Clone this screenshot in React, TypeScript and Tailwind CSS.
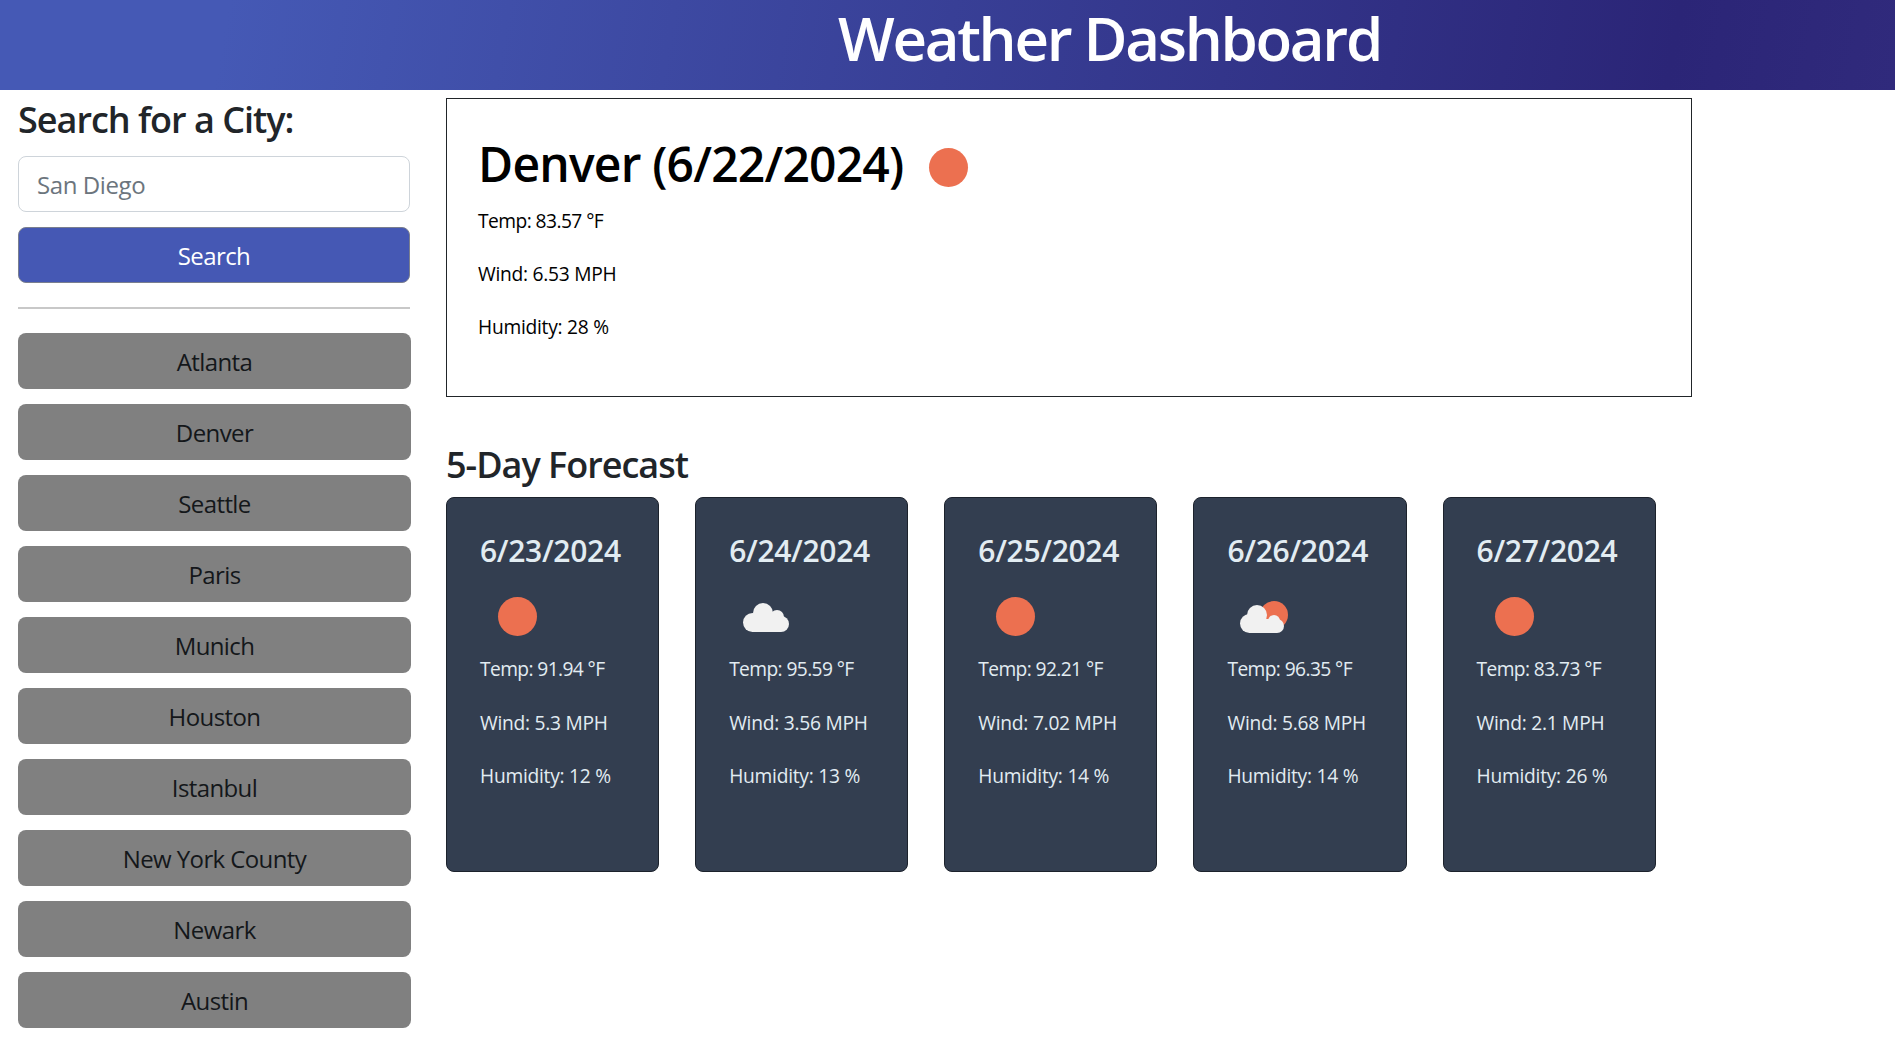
const font = "font-['Open_Sans','Noto_Sans',sans-serif]";

const cities = [
  "Atlanta",
  "Denver",
  "Seattle",
  "Paris",
  "Munich",
  "Houston",
  "Istanbul",
  "New York County",
  "Newark",
  "Austin",
];

type Icon = "sun" | "cloud" | "few";

const forecast: { date: string; icon: Icon; temp: string; wind: string; humidity: string }[] = [
  { date: "6/23/2024", icon: "sun", temp: "91.94", wind: "5.3", humidity: "12" },
  { date: "6/24/2024", icon: "cloud", temp: "95.59", wind: "3.56", humidity: "13" },
  { date: "6/25/2024", icon: "sun", temp: "92.21", wind: "7.02", humidity: "14" },
  { date: "6/26/2024", icon: "few", temp: "96.35", wind: "5.68", humidity: "14" },
  { date: "6/27/2024", icon: "sun", temp: "83.73", wind: "2.1", humidity: "26" },
];

function WeatherIcon({ icon }: { icon: Icon }) {
  return (
    <svg viewBox="0 0 75 75" className="block w-[75px] h-[75px]">
      {icon === "sun" && <circle cx="37.5" cy="37.5" r="19.5" fill="#ec7050" />}
      {icon === "few" && <circle cx="47" cy="36" r="14" fill="#ec7050" />}
      {icon === "cloud" && (
        <g fill="#f1f1f1">
          <circle cx="34" cy="34" r="10" />
          <circle cx="48" cy="38" r="7" />
          <circle cx="23.5" cy="43.5" r="9.5" />
          <circle cx="52" cy="45" r="8" />
          <rect x="23" y="38" width="29" height="15" />
        </g>
      )}
      {icon === "few" && (
        <g fill="#f1f1f1">
          <circle cx="30" cy="36" r="10" />
          <circle cx="47" cy="42" r="6" />
          <circle cx="22.5" cy="44.5" r="9.5" />
          <circle cx="50" cy="47" r="7" />
          <rect x="22" y="40" width="28" height="14" />
        </g>
      )}
    </svg>
  );
}

function App() {
  return (
    <div className={`${font} bg-white min-h-screen text-[#212529]`}>
      <header className="h-[90px] pl-[324px] pb-[14px] flex items-center justify-center bg-[linear-gradient(100deg,#4559b5_12%,#2b2577_88%,#302a7c_100%)]">
        <h1 className="text-[60px] leading-none font-semibold text-white tracking-[-2.3px]">
          Weather Dashboard
        </h1>
      </header>

      <div className="flex items-start pl-[18px]">
        <aside className="w-[393px] shrink-0">
          <h3 className="text-[36px] leading-[43px] mt-[8px] font-semibold tracking-[-1px]">
            Search for a City:
          </h3>
          <div className="mt-[15px] h-[56px] w-[392px] px-[18px] pt-[2px] flex items-center bg-white border border-[#ced4da] rounded-lg text-[24px] tracking-[-0.4px] text-[#6c757d]">
            San Diego
          </div>
          <button className="mt-[15px] h-[56px] w-[392px] pt-[2px] bg-[#4558b4] border border-[#7a7f8f] rounded-lg text-[24px] tracking-[-0.6px] text-white">
            Search
          </button>
          <hr className="mt-[24px] mb-[24px] w-[392px] border-t-2 border-[#c8c8c8]" />
          <div className="flex flex-col gap-[15px]">
            {cities.map((city) => (
              <button
                key={city}
                className="h-[56px] pt-[2px] bg-[#808080] rounded-lg text-[24px] tracking-[-0.6px] text-[#14171a]"
              >
                {city}
              </button>
            ))}
          </div>
        </aside>

        <main className="ml-[35px] w-[1246px]">
          <section className="mt-2 h-[299px] w-[1246px] border border-[#212529] px-[31px] pt-[32px] text-black">
            <div className="flex items-center">
              <h2 className="text-[48px] leading-[58px] font-semibold tracking-[-0.8px]">Denver (6/22/2024)</h2>
              <div className="-my-2 ml-[8px] pt-[7px]">
                <WeatherIcon icon="sun" />
              </div>
            </div>
            <p className="mt-[9px] text-[19.2px] leading-[29px] tracking-[-0.55px]">Temp: 83.57 °F</p>
            <p className="mt-[24px] text-[19.2px] leading-[29px] tracking-[-0.25px]">Wind: 6.53 MPH</p>
            <p className="mt-[24px] text-[19.2px] leading-[29px] tracking-[-0.25px]">Humidity: 28 %</p>
          </section>

          <h3 className="mt-[46px] text-[36px] leading-[43px] font-semibold tracking-[-1px]">5-Day Forecast</h3>

          <div className="mt-[11px] flex gap-[36px]">
            {forecast.map((day) => (
              <article
                key={day.date}
                className="w-[213.15px] h-[375px] shrink-0 bg-[#333e50] border border-[#1c222c] rounded-lg px-[33px] pt-[33px] text-[#e2ecf2]"
              >
                <h4 className="text-[30px] leading-[40px] font-semibold tracking-[-0.3px] whitespace-nowrap">
                  {day.date}
                </h4>
                <div className="mt-[8px]">
                  <WeatherIcon icon={day.icon} />
                </div>
                <p className="text-[19.2px] leading-[29px] tracking-[-0.6px] whitespace-nowrap">
                  Temp: {day.temp} °F
                </p>
                <p className="mt-[24.5px] text-[19.2px] leading-[29px] tracking-[-0.25px] whitespace-nowrap">
                  Wind: {day.wind} MPH
                </p>
                <p className="mt-[24.5px] text-[19.2px] leading-[29px] tracking-[-0.25px] whitespace-nowrap">
                  Humidity: {day.humidity} %
                </p>
              </article>
            ))}
          </div>
        </main>
      </div>
    </div>
  );
}

export default App;
